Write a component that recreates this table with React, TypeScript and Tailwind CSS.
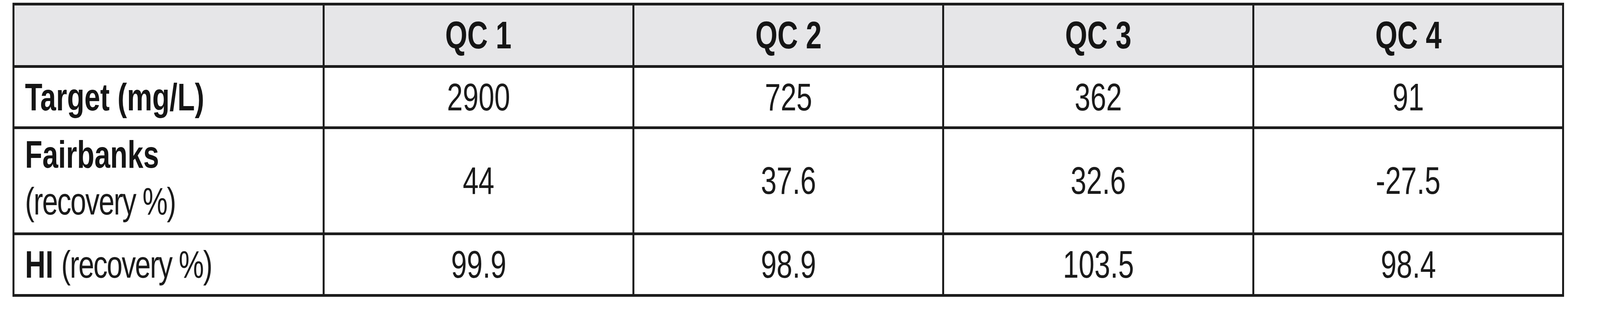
const QC_COLUMNS = ['QC 1', 'QC 2', 'QC 3', 'QC 4'];

const ROWS = [
  { key: 'target', values: ['2900', '725', '362', '91'], height: 'h-[157px]' },
  { key: 'fairbanks', values: ['44', '37.6', '32.6', '-27.5'], height: 'h-[272px]' },
  { key: 'hi', values: ['99.9', '98.9', '103.5', '98.4'], height: 'h-[158px]' },
];

const squeeze = 'inline-block scale-x-[0.734]';
const cellLine = 'border-x-[5px] border-y-[7px] border-[#1c1c1c]';

function Recovery() {
  return (
    <span className="font-normal tracking-[-3px] text-[#1a1a1a]">
      (recovery<span className="ml-[24px]">%)</span>
    </span>
  );
}

function RowLabel({ rowKey }: { rowKey: string }) {
  if (rowKey === 'target') {
    return <span className={`${squeeze} origin-left font-bold`}>Target (mg/L)</span>;
  }
  if (rowKey === 'fairbanks') {
    return (
      <div className={`${squeeze} origin-left whitespace-nowrap leading-[120px]`}>
        <div className="font-bold">Fairbanks</div>
        <Recovery />
      </div>
    );
  }
  return (
    <span className={`${squeeze} origin-left whitespace-nowrap`}>
      <span className="font-bold">HI</span> <Recovery />
    </span>
  );
}

export default function App() {
  return (
    <div className="min-h-screen bg-white pt-[7px] font-['Liberation_Sans',Arial,sans-serif] text-[99px] text-[#151515]">
      <table className="ml-[0.79%] w-[96.97%] table-fixed border-collapse border-x-[5px] border-y-[7px] border-[#1c1c1c]">
        <thead>
          <tr className="h-[160px] bg-[#e6e6e8]">
            <th className={cellLine} />
            {QC_COLUMNS.map((col) => (
              <th key={col} className={`${cellLine} text-center font-bold`}>
                <span className={squeeze}>{col}</span>
              </th>
            ))}
          </tr>
        </thead>
        <tbody>
          {ROWS.map((row) => (
            <tr key={row.key} className={row.height}>
              <td className={`${cellLine} pl-[27px] text-left align-middle`}>
                <RowLabel rowKey={row.key} />
              </td>
              {row.values.map((v, i) => (
                <td key={i} className={`${cellLine} text-center align-middle font-normal text-[#1a1a1a]`}>
                  <span className={squeeze}>{v}</span>
                </td>
              ))}
            </tr>
          ))}
        </tbody>
      </table>
    </div>
  );
}
